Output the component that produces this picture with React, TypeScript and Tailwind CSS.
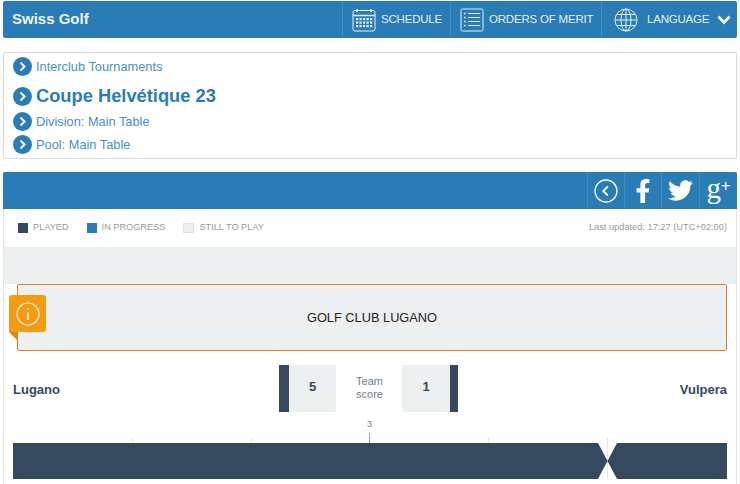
import { FaFacebookF, FaTwitter } from "react-icons/fa";

const SANS = "font-['Liberation_Sans',Arial,sans-serif]";

function CalendarIcon() {
  return (
    <svg width="24" height="24" viewBox="0 0 24 24" fill="none" stroke="#e3eff7" strokeWidth="1">
      <rect x="1" y="2.5" width="22" height="20.5" rx="2" />
      <path d="M1 7.5h22M5 1v3M19 1v3" strokeWidth="1.4" />
      <g fill="#e3eff7" stroke="none">
        {[10, 13.5, 17].flatMap((y) =>
          [4, 7.5, 11, 14.5, 18].map((x) => <rect key={`${x}-${y}`} x={x} y={y} width="2.2" height="2.2" />),
        )}
      </g>
    </svg>
  );
}

function ListIcon() {
  return (
    <svg width="24" height="24" viewBox="0 0 24 24" fill="none" stroke="#e3eff7" strokeWidth="1">
      <rect x="1" y="1" width="22" height="22" rx="1.5" />
      <path d="M8 5.5h12M8 9.5h12M8 13.5h12M8 17.5h12" strokeWidth="1.2" />
      <path d="M4 5.5h1.6M4 9.5h1.6M4 13.5h1.6M4 17.5h1.6" strokeWidth="1.4" />
    </svg>
  );
}

function GlobeIcon() {
  return (
    <svg width="24" height="24" viewBox="0 0 24 24" fill="none" stroke="#e3eff7" strokeWidth="1">
      <circle cx="12" cy="12" r="11" />
      <ellipse cx="12" cy="12" rx="5" ry="11" />
      <path d="M12 1v22M1 12h22M2.6 6.5h18.8M2.6 17.5h18.8" />
    </svg>
  );
}

function NavItem({ icon, label, width }: { icon: React.ReactNode; label: string; width: string }) {
  return (
    <div className={`flex h-full items-center gap-[5px] border-l border-[#3f8fc6] pl-[9px] ${width}`}>
      <span className="flex w-[24px] justify-center">{icon}</span>
      <span className="text-[11.5px] tracking-[-0.2px] text-[#e3eff7]">{label}</span>
    </div>
  );
}

function Crumb({ label, big }: { label: string; big?: boolean }) {
  return (
    <div className="flex items-center gap-[4px]">
      <span className="flex h-[19px] w-[19px] shrink-0 items-center justify-center rounded-full bg-[#2a7cb6]">
        <svg width="9" height="11" viewBox="0 0 9 11" fill="none" stroke="white" strokeWidth="2">
          <path d="M2.5 1.5 6.5 5.5 2.5 9.5" />
        </svg>
      </span>
      {big ? (
        <span className="text-[18.3px] font-bold leading-[24px] text-[#2a7cb6]">{label}</span>
      ) : (
        <span className="text-[12.8px] leading-[19px] text-[#4b8fc4]">{label}</span>
      )}
    </div>
  );
}

function ShareCell({ children, width }: { children: React.ReactNode; width: string }) {
  return (
    <div className={`flex h-full items-center justify-center border-l border-[#3f8fc6] text-white ${width}`}>
      {children}
    </div>
  );
}

function Legend({ label, swatch }: { label: string; swatch: string }) {
  return (
    <div className="flex items-center gap-[5px]">
      <span className={`h-[10px] ${swatch}`} />
      <span className="text-[9.2px] text-[#9a9a9a]">{label}</span>
    </div>
  );
}

function Chart() {
  const ticks = [132, 251, 488, 607];
  return (
    <svg width="714" height="48" viewBox="13 433 714 48" className="ml-[9px] block">
      {ticks.map((x) => (
        <path key={x} d={`M${x}.5 438v5`} stroke="#e3e6e8" />
      ))}
      <path d="M369.5 433v10" stroke="#9aa4ad" />
      <path d="M607.5 438v41" stroke="#e3e6e8" />
      <path d="M13 443H598L607.5 461 598 479H13Z" fill="#34495e" />
      <path d="M727 443H617L607.5 461 617 479H727Z" fill="#34495e" />
    </svg>
  );
}

export default function App() {
  return (
    <div className={`${SANS} h-[484px] w-[740px] overflow-hidden bg-white pl-[3px] pr-[3px] pt-[1px]`}>
      <header className="flex h-[37px] items-center justify-between rounded-[2px] bg-[#2a7cb6]">
        <span className="pl-[9px] text-[15px] font-bold text-[#eef5fa]">Swiss Golf</span>
        <nav className="flex h-full items-center">
          <NavItem icon={<CalendarIcon />} label="SCHEDULE" width="w-[108px]" />
          <NavItem icon={<ListIcon />} label="ORDERS OF MERIT" width="w-[151px]" />
          <div className="flex h-full w-[136px] items-center border-l border-[#3f8fc6] pl-[12px] text-[#e3eff7]">
            <GlobeIcon />
            <span className="ml-[9px] text-[11.5px] tracking-[-0.2px]">LANGUAGE</span>
            <svg width="14" height="10" viewBox="0 0 14 10" fill="none" stroke="white" strokeWidth="2.6" className="ml-[8px]">
              <path d="M1.5 1.5 7 7.5 12.5 1.5" />
            </svg>
          </div>
        </nav>
      </header>

      <section className="mt-[14px] flex h-[107px] flex-col rounded-[2px] border border-[#d8dcdf] pl-[9px] pt-[4px]">
        <Crumb label="Interclub Tournaments" />
        <div className="mt-[8px]">
          <Crumb label="Coupe Helvétique 23" big />
        </div>
        <div className="mt-[4px]">
          <Crumb label="Division: Main Table" />
        </div>
        <div className="mt-[4px]">
          <Crumb label="Pool: Main Table" />
        </div>
      </section>

      <section className="mt-[13px] h-[320px] border-x border-[#e2e4e6]">
        <div className="-mx-[1px] flex h-[37px] justify-end rounded-t-[2px] bg-[#2a7cb6]">
          <ShareCell width="w-[37px]">
            <svg width="24" height="24" viewBox="0 0 24 24" fill="none" stroke="white">
              <circle cx="12" cy="12" r="11" strokeWidth="1.3" />
              <path d="M13.8 7.5 9.3 12l4.5 4.5" strokeWidth="1.8" />
            </svg>
          </ShareCell>
          <ShareCell width="w-[37px]">
            <FaFacebookF size={24} />
          </ShareCell>
          <ShareCell width="w-[38px]">
            <FaTwitter size={25} />
          </ShareCell>
          <ShareCell width="w-[38px]">
            <span className="font-['Liberation_Serif',serif] text-[29px] leading-[29px]">
              g<span className="relative -top-[7px] font-['Liberation_Sans',sans-serif] text-[16px]">+</span>
            </span>
          </ShareCell>
        </div>

        <div className="flex h-[38px] items-center justify-between pl-[14px] pr-[9px]">
          <div className="flex items-center gap-[18px]">
            <Legend label="PLAYED" swatch="w-[10px] bg-[#34495e]" />
            <Legend label="IN PROGRESS" swatch="w-[10px] bg-[#2a7cb6]" />
            <Legend label="STILL TO PLAY" swatch="w-[11px] border border-[#dde1e3] bg-[#ecf0f1]" />
          </div>
          <span className="text-[9.25px] text-[#9a9a9a]">Last updated: 17:27 (UTC+02:00)</span>
        </div>

        <div className="h-[37px] bg-[#ecf0f1]" />

        <div className="relative ml-[13px] mr-[9px] flex h-[67px] items-center justify-center rounded-[2px] border border-[#e67e22] bg-[#ecf0f1] pt-[1px]">
          <span className="text-[12.8px] text-[#222]">GOLF CLUB LUGANO</span>
          <div className="absolute -left-[9px] top-[10px] flex h-[37px] w-[37px] items-center justify-center rounded-r-[3px] rounded-tl-[3px] bg-[#f39c12]">
            <svg width="24" height="24" viewBox="0 0 24 24" fill="none" stroke="#fdf0d5">
              <circle cx="12" cy="12" r="11" strokeWidth="1.2" />
              <path d="M12 10.5v7.5M12 6v2" strokeWidth="1.6" />
            </svg>
          </div>
          <div className="absolute -left-[9px] top-[47px] h-0 w-0 border-l-[8px] border-t-[8px] border-l-transparent border-t-[#e67e22]" />
        </div>

        <div className="flex h-[82px] items-center pb-[8px] pl-[9px] pr-[9px]">
          <span className="w-[266px] pt-[4px] text-[13px] font-bold text-[#34495e]">Lugano</span>
          <div className="flex h-[47px] items-center">
            <div className="h-full w-[10px] bg-[#34495e]" />
            <div className="flex h-full w-[47px] items-center justify-center bg-[#ecf0f1] pb-[2px] text-[13px] font-bold text-[#34495e]">5</div>
            <div className="w-[66px] pl-[1px] text-center text-[11px] leading-[13px] text-[#6f7f8c]">
              Team
              <br />
              score
            </div>
            <div className="flex h-full w-[48px] items-center justify-center bg-[#ecf0f1] pb-[2px] text-[13px] font-bold text-[#34495e]">1</div>
            <div className="h-full w-[8px] bg-[#34495e]" />
          </div>
          <span className="flex-1 pt-[4px] text-right text-[13px] font-bold text-[#34495e]">Vulpera</span>
        </div>

        <div className="relative">
          <span className="absolute left-[363px] -top-[15px] text-[9px] text-[#777]">3</span>
          <Chart />
        </div>
      </section>
    </div>
  );
}
